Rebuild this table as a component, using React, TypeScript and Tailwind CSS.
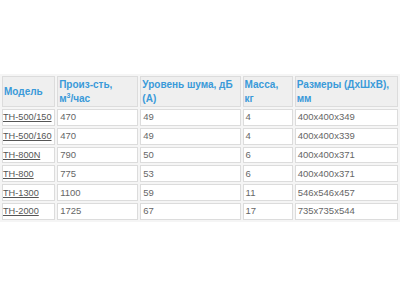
import React from "react";

const rows = [
  ["TH-500/150", "470", "49", "4", "400x400x349"],
  ["TH-500/160", "470", "49", "4", "400x400x339"],
  ["TH-800N", "790", "50", "6", "400x400x371"],
  ["TH-800", "775", "53", "6", "400x400x371"],
  ["TH-1300", "1100", "59", "11", "546x546x457"],
  ["TH-2000", "1725", "67", "17", "735x735x544"],
];

export default function App() {
  const th =
    "bg-[#efefef] border border-[#dcdcdc] text-[#3a9ad9] font-bold text-[10px] leading-[14px] text-left align-middle pl-[1px] pr-[1px] py-0";
  const tdBase =
    "bg-white border border-[#dcdcdc] text-[#666666] text-[9.5px] leading-[12px] text-left align-middle pr-0 py-0 h-[16.8px] whitespace-nowrap";
  const td = tdBase + " pl-[2px]";
  const tdFirst = tdBase + " pl-0";
  return (
    <div
      className="w-[400px] h-[300px] bg-white overflow-hidden"
      style={{ fontFamily: '"Liberation Sans", Arial, sans-serif' }}
    >
      <div className="pt-[74px] h-[222px] overflow-hidden">
        <table className="border-separate border-spacing-x-[2px] border-spacing-y-[2px] w-[400px] table-fixed bg-[#f5f5f5]">
          <colgroup>
            <col className="w-[53px]" />
            <col className="w-[81px]" />
            <col className="w-[100px]" />
            <col className="w-[50px]" />
            <col className="w-[103px]" />
          </colgroup>
          <thead>
            <tr>
              <th className={th + " h-[31px]"}>Модель</th>
              <th className={th}>
                Произ-сть,
                <br />
                м<sup className="text-[7px]">3</sup>/час
              </th>
              <th className={th}>
                Уровень шума, дБ
                <br />
                (А)
              </th>
              <th className={th}>
                Масса,
                <br />
                кг
              </th>
              <th className={th}>
                Размеры (ДхШхВ),
                <br />
                мм
              </th>
            </tr>
          </thead>
          <tbody>
            {rows.map((r) => (
              <tr key={r[0]}>
                <td className={tdFirst}>
                  <a className="underline text-[#555555] text-[9.2px]" href="#">
                    {r[0]}
                  </a>
                </td>
                <td className={td}>{r[1]}</td>
                <td className={td}>{r[2]}</td>
                <td className={td}>{r[3]}</td>
                <td className={td}>{r[4]}</td>
              </tr>
            ))}
          </tbody>
        </table>
      </div>
    </div>
  );
}
